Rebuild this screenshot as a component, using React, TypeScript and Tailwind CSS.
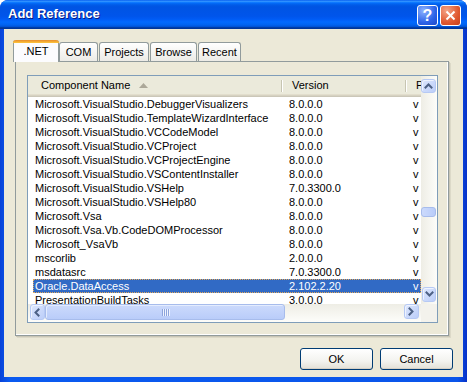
import React from "react";

const rows: [string, string][] = [
  ["Microsoft.VisualStudio.DebuggerVisualizers", "8.0.0.0"],
  ["Microsoft.VisualStudio.TemplateWizardInterface", "8.0.0.0"],
  ["Microsoft.VisualStudio.VCCodeModel", "8.0.0.0"],
  ["Microsoft.VisualStudio.VCProject", "8.0.0.0"],
  ["Microsoft.VisualStudio.VCProjectEngine", "8.0.0.0"],
  ["Microsoft.VisualStudio.VSContentInstaller", "8.0.0.0"],
  ["Microsoft.VisualStudio.VSHelp", "7.0.3300.0"],
  ["Microsoft.VisualStudio.VSHelp80", "8.0.0.0"],
  ["Microsoft.Vsa", "8.0.0.0"],
  ["Microsoft.Vsa.Vb.CodeDOMProcessor", "8.0.0.0"],
  ["Microsoft_VsaVb", "8.0.0.0"],
  ["mscorlib", "2.0.0.0"],
  ["msdatasrc", "7.0.3300.0"],
  ["Oracle.DataAccess", "2.102.2.20"],
  ["PresentationBuildTasks", "3.0.0.0"],
];

function Chevron({ dir }: { dir: "up" | "down" | "left" | "right" }) {
  const pts =
    dir === "up"
      ? "1.5,5.5 4.5,2.5 7.5,5.5"
      : dir === "down"
      ? "1.5,2.5 4.5,5.5 7.5,2.5"
      : dir === "left"
      ? "5.5,1.5 2.5,4.5 5.5,7.5"
      : "2.5,1.5 5.5,4.5 2.5,7.5";
  return (
    <svg width="9" height="9" viewBox="0 0 9 9">
      <polyline points={pts} fill="none" stroke="#4D6185" strokeWidth="2" strokeLinecap="square" />
    </svg>
  );
}

function ScrollBtn({ dir }: { dir: "up" | "down" | "left" | "right" }) {
  return (
    <div className="w-full h-full rounded-[3px] border border-[#B6C9F4] bg-[linear-gradient(135deg,#DCE6FD,#BCCEF9)] flex items-center justify-center shadow-[inset_1px_1px_0_#EEF3FE]">
      <Chevron dir={dir} />
    </div>
  );
}

function Tab({ label, w, selected }: { label: string; w: string; selected?: boolean }) {
  if (selected) {
    return (
      <div
        className={`${w} h-[22px] -mb-[1px] relative z-10 flex items-center justify-center bg-[#FCFCFE] border-x border-[#919B9C] rounded-t-[3px] text-black text-[11px] pt-[1px]`}
      >
        <div className="absolute left-[-1px] right-[-1px] top-0 h-[3px] rounded-t-[3px] bg-[linear-gradient(to_bottom,#E68B2C,#FFC73C)]" />
        {label}
      </div>
    );
  }
  return (
    <div
      className={`${w} h-[19px] flex items-center justify-center rounded-t-[3px] border border-b-0 border-[#919B9C] bg-[linear-gradient(to_bottom,#FFFFFF,#ECEBE6)] text-black text-[11px] pt-[1px]`}
    >
      {label}
    </div>
  );
}

export default function App() {
  return (
    <div className="w-[467px] h-[382px] bg-white font-['Tahoma','Liberation_Sans',Arial,sans-serif]">
      <div className="w-[467px] h-[382px] rounded-t-[8px] overflow-hidden flex flex-col bg-[linear-gradient(to_right,#0842D8,#0A5AF0_2%,#0A55EA_98%,#0731C8)]">
        {/* Title bar */}
        <div className="h-[29px] shrink-0 flex pl-[8px] pr-[6px] bg-[linear-gradient(to_bottom,#0058EE_0%,#3593FF_4%,#288EFF_6%,#127DFF_8%,#036FFC_10%,#0262EE_14%,#0057E5_20%,#0054E3_24%,#0055EB_56%,#005BF5_66%,#026AFE_76%,#0062EF_86%,#0052D6_92%,#0040AB_94%,#003092_100%)]">
          <span className="self-center mt-[-1px] text-white font-bold text-[13px] font-['Liberation_Sans',Arial,sans-serif] [text-shadow:1px_1px_0_#0A1883]">
            Add Reference
          </span>
          <div className="ml-auto mt-[5px] flex gap-[2px] h-[21px]">
            <div className="w-[21px] h-[21px] rounded-[3px] border border-white bg-[radial-gradient(circle_at_30%_25%,#8EB4FF,#2D63E8_60%,#1A47C9)] flex items-center justify-center text-white font-bold text-[16px] leading-none font-['Liberation_Sans',Arial,sans-serif]">
              ?
            </div>
            <div className="w-[21px] h-[21px] rounded-[3px] border border-white bg-[radial-gradient(circle_at_30%_25%,#F4A488,#E0582F_60%,#C8401C)] flex items-center justify-center">
              <svg width="11" height="11" viewBox="0 0 11 11">
                <line x1="1.5" y1="1.5" x2="9.5" y2="9.5" stroke="white" strokeWidth="2" />
                <line x1="9.5" y1="1.5" x2="1.5" y2="9.5" stroke="white" strokeWidth="2" />
              </svg>
            </div>
          </div>
        </div>

        {/* Client area */}
        <div className="flex-1 mx-[4px] mb-[5px] bg-[#ECE9D8] flex flex-col text-[11px] text-black">
          {/* Tabs */}
          <div className="mt-[11px] ml-[9px] h-[21px] flex items-end">
            <Tab label=".NET" w="w-[46px]" selected />
            <Tab label="COM" w="w-[39px]" />
            <div className="ml-[1px]">
              <Tab label="Projects" w="w-[50px]" />
            </div>
            <div className="ml-[1px]">
              <Tab label="Browse" w="w-[47px]" />
            </div>
            <div className="ml-[1px]">
              <Tab label="Recent" w="w-[43px]" />
            </div>
          </div>

          {/* Tab panel */}
          <div className="ml-[11px] w-[434px] h-[275px] border border-[#919B9C] bg-[#ECE9D8] shadow-[inset_-1px_-1px_0_#FFFFFF,1px_1px_0_#C9C6B6,2px_2px_0_#DCD9C8]">
            {/* List view */}
            <div className="ml-[11px] mt-[13px] w-[411px] h-[248px] border border-[#7F9DB9] bg-white flex flex-col">
              <div className="flex h-[228px]">
                {/* content */}
                <div className="w-[393px] h-[228px] overflow-hidden flex flex-col">
                  {/* header */}
                  <div className="h-[21px] shrink-0 flex bg-[#EBEADB] shadow-[inset_0_-1px_0_#CBC7B8,inset_0_-2px_0_#D6D2C2,inset_0_-3px_0_#E2DECD]">
                    <div className="w-[255px] shrink-0 flex items-center pl-[13px] pb-[2px] relative">
                      <span>Component Name</span>
                      <svg width="9" height="5" viewBox="0 0 9 5" className="ml-[9px]">
                        <polygon points="0,5 4.5,0 9,5" fill="#ACA899" />
                      </svg>
                      <div className="absolute right-0 top-[4px] bottom-[5px] w-[2px] border-l border-[#C7C5B2] bg-white" />
                    </div>
                    <div className="w-[124px] shrink-0 flex items-center pl-[9px] pb-[2px] relative">
                      <span>Version</span>
                      <div className="absolute right-0 top-[4px] bottom-[5px] w-[2px] border-l border-[#C7C5B2] bg-white" />
                    </div>
                    <div className="flex-1 flex items-center pl-[9px] pb-[2px]">P</div>
                  </div>
                  {/* rows */}
                  <div className="flex flex-col">
                    {rows.map(([name, ver]) => {
                      const sel = name === "Oracle.DataAccess";
                      return (
                        <div key={name} className="h-[14px] shrink-0 flex leading-[14px]">
                          <div
                            className={`ml-[5px] flex-1 flex ${
                              sel
                                ? "bg-[#316AC5] text-white outline-1 outline-dotted outline-[#E2A95B] -outline-offset-1"
                                : ""
                            }`}
                          >
                            <div className="w-[250px] shrink-0 pl-[2px] whitespace-nowrap overflow-hidden">{name}</div>
                            <div className="w-[124px] shrink-0 pl-[6px] whitespace-nowrap">{ver}</div>
                            <div className="pl-[6px]">v</div>
                          </div>
                        </div>
                      );
                    })}
                  </div>
                </div>
                {/* vertical scrollbar */}
                <div className="w-[16px] h-[228px] flex flex-col bg-[linear-gradient(to_right,#EEEDE5,#FDFDFA)]">
                  <div className="h-[17px] pt-[3px] pb-[0px] pl-[0px] pr-[1px]">
                    <ScrollBtn dir="up" />
                  </div>
                  <div className="flex-1 relative">
                    <div className="absolute left-[0px] right-[1px] top-[114px] h-[10px] rounded-[3px] border border-[#A7BCEC] bg-[linear-gradient(to_right,#CCDAFC,#B9CCF9)]" />
                  </div>
                  <div className="h-[17px] pt-[0px] pb-[2px] pl-[1px] pr-[1px]">
                    <ScrollBtn dir="down" />
                  </div>
                </div>
              </div>
              {/* horizontal scrollbar */}
              <div className="flex h-[18px]">
                <div className="w-[393px] flex bg-[linear-gradient(to_bottom,#EEEDE5,#FDFDFA)] pt-[0px] pb-[2px]">
                  <div className="w-[17px] pl-[2px] pr-[0px]">
                    <ScrollBtn dir="left" />
                  </div>
                  <div className="w-[240px] ml-[0px] rounded-[3px] border border-[#A7BCEC] bg-[linear-gradient(to_bottom,#CCDAFC,#B9CCF9)] flex items-center justify-center shadow-[inset_1px_1px_0_#E4ECFE]">
                    <div className="flex gap-[1px]">
                      {[0, 1, 2, 3].map((i) => (
                        <div key={i} className="w-[1px] h-[7px] bg-[#8CA4DC] shadow-[1px_0_0_#EEF3FE]" />
                      ))}
                    </div>
                  </div>
                  <div className="flex-1" />
                  <div className="w-[17px] pr-[2px] pb-[1px]">
                    <ScrollBtn dir="right" />
                  </div>
                </div>
                <div className="w-[16px] bg-[#F3F2EC]" />
              </div>
            </div>
          </div>

          {/* Buttons */}
          <div className="mt-[12px] mr-[10px] flex justify-end gap-[7px]">
            <button className="w-[73px] h-[22px] rounded-[3px] border border-[#003C74] bg-[linear-gradient(to_bottom,#FFFFFF,#F3F3EF_60%,#E3E0D6)] shadow-[inset_0_-1px_0_#D6D0C5] text-[11px] text-black">
              OK
            </button>
            <button className="w-[73px] h-[22px] rounded-[3px] border border-[#003C74] bg-[linear-gradient(to_bottom,#FFFFFF,#F3F3EF_60%,#E3E0D6)] shadow-[inset_0_-1px_0_#D6D0C5] text-[11px] text-black">
              Cancel
            </button>
          </div>
        </div>
      </div>
    </div>
  );
}
